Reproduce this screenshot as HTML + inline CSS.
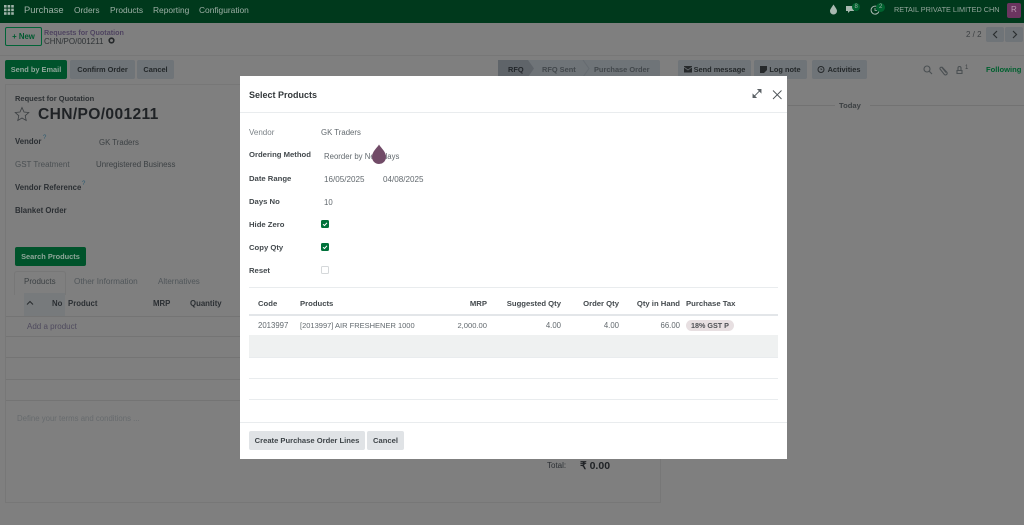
<!DOCTYPE html>
<html><head><meta charset="utf-8"><title>Select Products</title>
<style>
html,body{margin:0;padding:0}
body{width:1024px;height:525px;overflow:hidden;position:relative;background:#7f7f7f;font-family:"Liberation Sans",sans-serif;font-size:8.2px;color:#2b2f33}
#r{position:absolute;left:0;top:0;width:1024px;height:525px;overflow:hidden;filter:blur(.3px)}
#r div{position:absolute}
.t{position:absolute;white-space:nowrap;line-height:12px;margin-top:1px}
.z{margin-top:0}
.b{font-weight:bold;font-size:7.8px}
.l{position:absolute;height:1px}
.btn{position:absolute;border-radius:2px;text-align:center;font-weight:bold;white-space:nowrap;font-size:7.4px}
.m{color:#62696e;font-size:7.8px}
.mb{color:#43494d;font-weight:bold;font-size:7.7px}
.n{color:#9db0a6;font-size:8.4px;margin-top:0}
</style></head><body><div id="r">
<!-- navbar -->
<div style="left:0;top:0;width:1024px;height:23px;background:#00391c"></div>
<svg style="position:absolute;left:4px;top:5px" width="10" height="10" fill="#9fb3a9"><rect width="2.6" height="2.6"/><rect x="3.6" width="2.6" height="2.6"/><rect x="7.2" width="2.6" height="2.6"/><rect y="3.6" width="2.6" height="2.6"/><rect x="3.6" y="3.6" width="2.6" height="2.6"/><rect x="7.2" y="3.6" width="2.6" height="2.6"/><rect y="7.2" width="2.6" height="2.6"/><rect x="3.6" y="7.2" width="2.6" height="2.6"/><rect x="7.2" y="7.2" width="2.6" height="2.6"/></svg>
<span class="t n" style="left:24px;top:4px;font-size:9.4px">Purchase</span>
<span class="t n" style="left:74px;top:4px">Orders</span>
<span class="t n" style="left:110px;top:4px">Products</span>
<span class="t n" style="left:153px;top:4px">Reporting</span>
<span class="t n" style="left:199px;top:4px">Configuration</span>
<svg style="position:absolute;left:829px;top:4px" width="9" height="11"><path d="M4.5 0.5C6 3 8 5 8 7a3.5 3.5 0 0 1-7 0C1 5 3 3 4.500 0.500z" fill="#a9b9b1"/></svg>
<svg style="position:absolute;left:845px;top:5px" width="11" height="10"><path d="M1 1h8v5H5l-2 2V6H1z" fill="#a9b9b1"/></svg>
<div style="left:852px;top:3px;width:8px;height:8px;border-radius:50%;background:#00622f"></div>
<span class="t z" style="left:854.500px;top:1px;font-size:6px;color:#9db0a6">8</span>
<svg style="position:absolute;left:870px;top:5px" width="11" height="10"><path d="M8.500 3A4 4 0 1 0 9 6" fill="none" stroke="#a9b9b1" stroke-width="1"/><path d="M5 3v2.500h2" fill="none" stroke="#a9b9b1" stroke-width=".8"/></svg>
<div style="left:876px;top:3px;width:9px;height:9px;border-radius:50%;background:#00622f"></div>
<span class="t z" style="left:879px;top:1px;font-size:6px;color:#9db0a6">2</span>
<span class="t z" style="left:894px;top:4px;font-size:7.300px;color:#93a69c">RETAIL PRIVATE LIMITED CHN</span>
<div style="left:1007px;top:3px;width:14px;height:15px;border-radius:2px;background:#6b3560"></div>
<span class="t z" style="left:1011px;top:4px;color:#b99ab2;font-size:8px">R</span>
<!-- control panel -->
<div class="l" style="left:0;top:55px;width:1024px;background:#777"></div>
<div class="btn" style="left:5px;top:27px;width:37px;height:19px;border:1px solid #006437;box-sizing:border-box;color:#005a30;line-height:17px;font-size:7.800px">+ New</div>
<span class="t b" style="left:44px;top:26px;font-size:7.200px;color:#4f4460">Requests for Quotation</span>
<span class="t" style="left:44px;top:35px;color:#2f3336;font-size:8px">CHN/PO/001211</span>
<svg style="position:absolute;left:108px;top:37px" width="7" height="7"><circle cx="3.500" cy="3.500" r="2.300" fill="none" stroke="#25282a" stroke-width="1.600"/></svg>
<span class="t z" style="left:966px;top:29px;color:#3c4043;font-size:8px">2 / 2</span>
<div class="btn" style="left:986px;top:27px;width:18px;height:15px;background:#6f7478"></div>
<div class="btn" style="left:1005px;top:27px;width:18px;height:15px;background:#6f7478"></div>
<svg style="position:absolute;left:986px;top:27px" width="37" height="15" fill="none" stroke="#2a2e30" stroke-width="1.200"><path d="M11 4l-3.500 3.500L11 11M27 4l3.500 3.500L27 11"/></svg>
<!-- buttons -->
<div class="btn" style="left:5px;top:60px;width:62px;height:19px;background:#00532b;color:#8fa69a;line-height:19px">Send by Email</div>
<div class="btn" style="left:70px;top:60px;width:65px;height:19px;background:#6f7478;color:#24282a;line-height:19px">Confirm Order</div>
<div class="btn" style="left:137px;top:60px;width:37px;height:19px;background:#6f7478;color:#24282a;line-height:19px">Cancel</div>
<!-- statusbar -->
<div style="left:498px;top:60px;width:162px;height:17px;background:#6f7478;border-radius:2px"></div>
<svg style="position:absolute;left:498px;top:60px" width="162" height="17"><path d="M0 0H30L36 8.500 30 17H0z" fill="#5f6469"/><path d="M85 0l6 8.500-6 8.500" fill="none" stroke="#666b70"/></svg>
<span class="t b" style="left:508px;top:63px;color:#23262a;font-size:7.400px">RFQ</span>
<span class="t b" style="left:542px;top:63px;color:#43484c;font-size:7.400px">RFQ Sent</span>
<span class="t b" style="left:594px;top:63px;color:#43484c;font-size:7.400px">Purchase Order</span>
<!-- chatter buttons -->
<div class="btn" style="left:678px;top:60px;width:73px;height:19px;background:#6f7478;color:#24282a;line-height:19px;padding-left:10px;box-sizing:border-box">Send message</div>
<div class="btn" style="left:754px;top:60px;width:53px;height:19px;background:#6f7478;color:#24282a;line-height:19px;padding-left:9px;box-sizing:border-box">Log note</div>
<div class="btn" style="left:812px;top:60px;width:55px;height:19px;background:#6f7478;color:#24282a;line-height:19px;padding-left:9px;box-sizing:border-box">Activities</div>
<svg style="position:absolute;left:684px;top:66px" width="160" height="9"><rect x="0" y="0" width="8" height="6.500" fill="#26292b"/><path d="M0 1l4 3 4-3" stroke="#6f7478" fill="none" stroke-width=".7"/><path d="M76 0h7v4l-3 3h-4z" fill="#26292b"/><circle cx="137" cy="3.500" r="3" fill="none" stroke="#26292b"/><path d="M137 2v1.700h1.200" stroke="#26292b" fill="none" stroke-width=".6"/></svg>
<svg style="position:absolute;left:922px;top:64px" width="60" height="12" fill="none" stroke="#4b5053" stroke-width="1.100"><circle cx="5" cy="5" r="3"/><path d="M7.300 7.300L10 10"/><path d="M20 3l5 5.500a1.500 1.500 0 0 1-3 1.500l-4-5a1.300 1.300 0 0 1 2-1.500l4 5"/><path d="M35 9.500h5V6.500h-5zM36 6.500V4a1.500 1.500 0 0 1 3 0v2.500"/></svg>
<span class="t z" style="left:965px;top:62px;font-size:6px;color:#3c4043">1</span>
<span class="t b" style="left:986px;top:63px;color:#00602f;font-size:7.600px">Following</span>
<!-- today -->
<div class="l" style="left:788px;top:105px;width:47px;background:#727272"></div>
<div class="l" style="left:870px;top:105px;width:154px;background:#727272"></div>
<span class="t b z" style="left:839px;top:100px;color:#3c4043;font-size:7.600px">Today</span>
<!-- sheet -->
<div style="left:5px;top:84px;width:656px;height:419px;border:1px solid #777;box-sizing:border-box"></div>
<span class="t b z" style="left:15px;top:93px;color:#2d3134;font-size:7.500px">Request for Quotation</span>
<svg style="position:absolute;left:14px;top:106px" width="16" height="16"><path d="M8 1.500l2 4.500 4.800.5-3.600 3.200 1 4.800L8 12l-4.200 2.500 1-4.800L1.200 6.500 6 6z" fill="none" stroke="#3a3e41" stroke-width=".8"/></svg>
<span class="t b z" style="left:38px;top:108px;font-size:15.600px;line-height:14px;color:#1f2225;letter-spacing:.35px">CHN/PO/001211</span>
<span class="t b" style="left:15px;top:135px">Vendor</span><span class="t z" style="left:43px;top:132px;font-size:6px;color:#2a5a70">?</span>
<span class="t" style="left:99px;top:136px;color:#3c4144;font-size:7.800px">GK Traders</span>
<span class="t" style="left:15px;top:158px;color:#4b5053;font-size:8px">GST Treatment</span>
<span class="t" style="left:96px;top:158px;color:#3c4144;font-size:7.900px">Unregistered Business</span>
<span class="t b" style="left:15px;top:181px">Vendor Reference</span><span class="t z" style="left:82px;top:178px;font-size:6px;color:#2a5a70">?</span>
<span class="t b" style="left:15px;top:204px">Blanket Order</span>
<div class="btn" style="left:15px;top:247px;width:71px;height:19px;background:#00532b;color:#8fa69a;line-height:19px">Search Products</div>
<div style="left:14px;top:271px;width:52px;height:24px;border:1px solid #777;border-bottom:none;border-radius:3px 3px 0 0;box-sizing:border-box"></div>
<span class="t z" style="left:24px;top:276px;color:#3c4144;font-size:8px">Products</span>
<span class="t z" style="left:74px;top:276px;color:#50565a">Other Information</span>
<span class="t z" style="left:158px;top:276px;color:#50565a;font-size:8px">Alternatives</span>
<div style="left:24px;top:293px;width:41px;height:23px;background:#777a7c"></div>
<svg style="position:absolute;left:26px;top:300px" width="8" height="6"><path d="M1 4.500l3-3 3 3" fill="none" stroke="#2a2d30" stroke-width="1.100"/></svg>
<span class="t b z" style="left:52px;top:298px">No</span>
<span class="t b z" style="left:68px;top:298px">Product</span>
<span class="t b z" style="left:153px;top:298px">MRP</span>
<span class="t b z" style="left:190px;top:298px">Quantity</span>
<div class="l" style="left:6px;top:316px;width:654px;background:#747474"></div>
<span class="t" style="left:27px;top:320px;color:#4f4a5e;font-size:8px">Add a product</span>
<div class="l" style="left:6px;top:336px;width:654px;background:#747474"></div>
<div class="l" style="left:6px;top:357px;width:654px;background:#747474"></div>
<div class="l" style="left:6px;top:379px;width:654px;background:#747474"></div>
<div class="l" style="left:6px;top:400px;width:654px;background:#747474"></div>
<span class="t" style="left:17px;top:412px;color:#676b6e;font-size:7.800px">Define your terms and conditions ...</span>
<span class="t z" style="left:547px;top:460px;color:#2b2f33;font-size:8px">Total:</span>
<span class="t z" style="left:580px;top:460px;font-size:10.500px;font-weight:bold;color:#1f2225">₹ 0.00</span>
<!-- modal -->
<div style="left:240px;top:76px;width:547px;height:383px;background:#fff"></div>
<span class="t b" style="left:249px;top:88px;font-size:9px;line-height:13px;color:#33383b">Select Products</span>
<svg style="position:absolute;left:752px;top:88px" width="10" height="11" fill="none" stroke="#5a6064" stroke-width=".9"><path d="M1.500 9L8.500 2"/><path d="M6 1.500h3V4.500z" fill="#5a6064"/><path d="M1 6.500v3h3z" fill="#5a6064"/></svg>
<svg style="position:absolute;left:772px;top:89px" width="11" height="11" fill="none" stroke="#4d5357" stroke-width=".9"><path d="M1 1.500l8.500 8.500M9.500 1.500L1 10"/></svg>
<div class="l" style="left:240px;top:112px;width:547px;background:#e9ecee"></div>
<span class="t" style="left:249px;top:126px;color:#7b8287;font-size:8px">Vendor</span>
<span class="t m" style="left:321px;top:126px">GK Traders</span>
<span class="t mb z" style="left:249px;top:149px">Ordering Method</span>
<span class="t m" style="left:324px;top:150px">Reorder by Next days</span>
<svg style="position:absolute;left:371px;top:144px" width="16" height="21"><path d="M8 .5C10 4 15 7.500 15 13a7 7 0 0 1-14 0C1 7.500 6 4 8 .5z" fill="#714b67"/></svg>
<span class="t mb" style="left:249px;top:172px">Date Range</span>
<span class="t m" style="left:324px;top:173px;font-size:8.100px">16/05/2025</span>
<span class="t m" style="left:383px;top:173px;font-size:8.100px">04/08/2025</span>
<span class="t mb" style="left:249px;top:195px">Days No</span>
<span class="t m" style="left:324px;top:196px">10</span>
<span class="t mb" style="left:249px;top:218px">Hide Zero</span>
<span class="t mb" style="left:249px;top:241px">Copy Qty</span>
<span class="t mb" style="left:249px;top:264px">Reset</span>
<svg style="position:absolute;left:321px;top:220px" width="8" height="8"><rect width="8" height="8" rx="1.500" fill="#00713a"/><path d="M2 4.200l1.500 1.300L6 2.800" fill="none" stroke="#fff"/></svg>
<svg style="position:absolute;left:321px;top:243px" width="8" height="8"><rect width="8" height="8" rx="1.500" fill="#00713a"/><path d="M2 4.200l1.500 1.300L6 2.800" fill="none" stroke="#fff"/></svg>
<div style="left:321px;top:266px;width:8px;height:8px;border:1px solid #d5d8da;border-radius:1.500px;box-sizing:border-box"></div>
<div class="l" style="left:249px;top:287px;width:529px;background:#e9ecee"></div>
<span class="t mb" style="left:258px;top:297px">Code</span>
<span class="t mb" style="left:300px;top:297px">Products</span>
<span class="t mb" style="right:537px;top:297px">MRP</span>
<span class="t mb" style="right:463px;top:297px">Suggested Qty</span>
<span class="t mb" style="right:405px;top:297px">Order Qty</span>
<span class="t mb" style="right:344px;top:297px">Qty in Hand</span>
<span class="t mb" style="left:686px;top:297px">Purchase Tax</span>
<div style="left:249px;top:314px;width:529px;height:2px;background:#e3e6e9"></div>
<span class="t m" style="left:258px;top:319px">2013997</span>
<span class="t m" style="left:300px;top:319px;font-size:7.500px">[2013997] AIR FRESHENER 1000</span>
<span class="t m" style="right:537px;top:319px;font-size:7.600px">2,000.00</span>
<span class="t m" style="right:463px;top:319px">4.00</span>
<span class="t m" style="right:405px;top:319px">4.00</span>
<span class="t m" style="right:344px;top:319px">66.00</span>
<div class="btn" style="left:686px;top:320px;width:48px;height:11px;background:#e7dfe1;border-radius:6px;color:#4d5054;line-height:11px;font-size:7.200px">18% GST P</div>
<div style="left:249px;top:335px;width:529px;height:22px;background:#eff1f1"></div>
<div class="l" style="left:249px;top:357px;width:529px;background:#e9ecee"></div>
<div class="l" style="left:249px;top:378px;width:529px;background:#e9ecee"></div>
<div class="l" style="left:249px;top:399px;width:529px;background:#e9ecee"></div>
<div class="l" style="left:240px;top:422px;width:547px;background:#e9ecee"></div>
<div class="btn" style="left:249px;top:431px;width:116px;height:19px;background:#e0e3e6;color:#3f4549;line-height:19px;font-size:7.600px">Create Purchase Order Lines</div>
<div class="btn" style="left:367px;top:431px;width:37px;height:19px;background:#e0e3e6;color:#3f4549;line-height:19px;font-size:7.600px">Cancel</div>
</div></body></html>
